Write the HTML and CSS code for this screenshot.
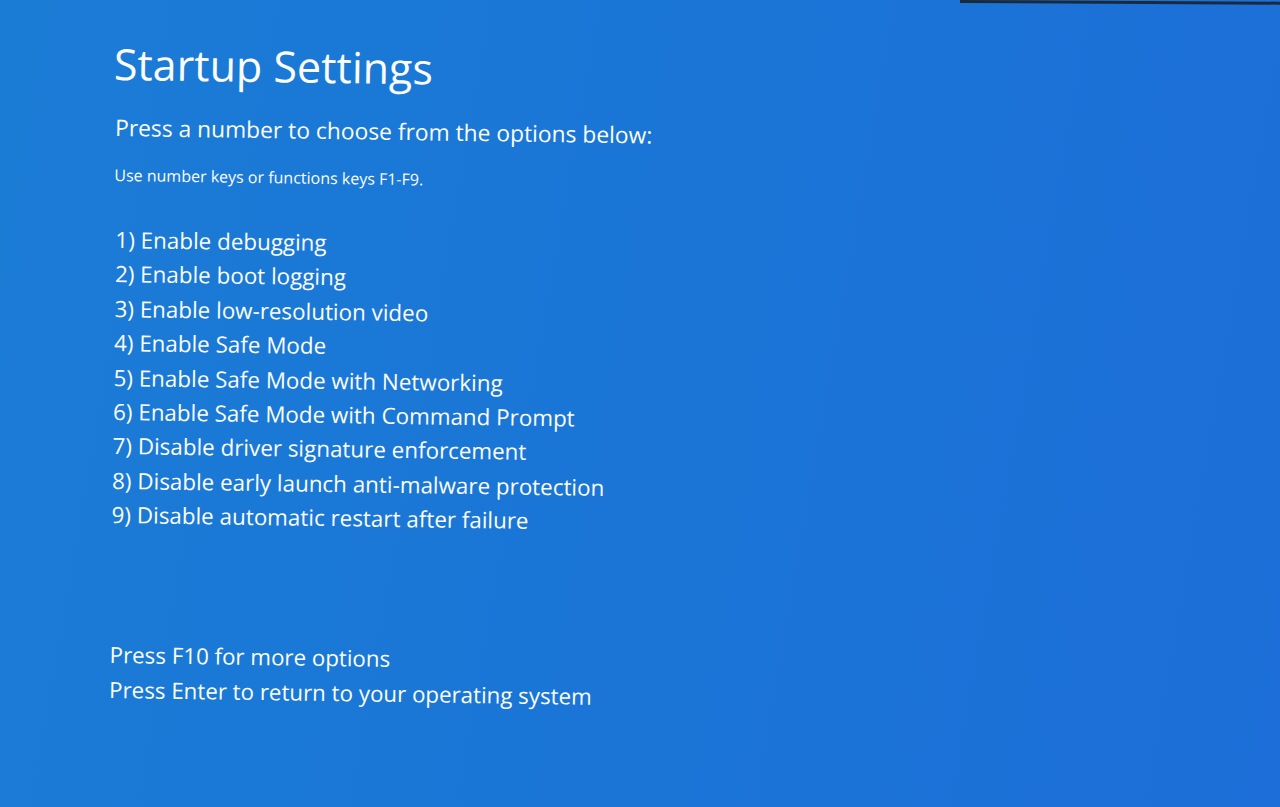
FILE: index.html
```html
<!DOCTYPE html>
<html lang="en">
<head>
<meta charset="utf-8">
<title>Startup Settings</title>
<link rel="stylesheet" href="styles.css">
</head>
<body>
<div class="bezel"></div>
<main class="screen">
  <h1 class="title">Startup Settings</h1>
  <p class="lead">Press a number to choose from the options below:</p>
  <p class="hint">Use number keys or functions keys F1-F9.</p>
  <ol class="options">
    <li>1) Enable debugging</li>
    <li>2) Enable boot logging</li>
    <li>3) Enable low-resolution video</li>
    <li>4) Enable Safe Mode</li>
    <li>5) Enable Safe Mode with Networking</li>
    <li>6) Enable Safe Mode with Command Prompt</li>
    <li>7) Disable driver signature enforcement</li>
    <li>8) Disable early launch anti-malware protection</li>
    <li>9) Disable automatic restart after failure</li>
  </ol>
  <div class="footer">
    <p>Press F10 for more options</p>
    <p>Press Enter to return to your operating system</p>
  </div>
</main>
</body>
</html>
```

FILE: styles.css
```css
html, body {
  margin: 0;
  padding: 0;
  width: 1280px;
  height: 807px;
  overflow: hidden;
}
body {
  position: relative;
  background: linear-gradient(100deg, #1b7cd6 0%, #1a76d6 45%, #1d6ed8 100%);
  color: #fbfdff;
  font-family: "Open Sans", "Noto Sans", sans-serif;
}
.bezel {
  position: absolute;
  top: 0;
  left: 960px;
  right: 0;
  height: 3px;
  background: #1a2a3a;
  transform: rotate(0.3deg);
  transform-origin: left top;
}
.screen {
  padding: 34px 0 0 114px;
  transform: rotate(0.8deg);
  transform-origin: 114px 60px;
}
.title {
  margin: 0;
  font-size: 43px;
  font-weight: 400;
  line-height: 60px;
  letter-spacing: 0;
}
.lead {
  margin: 19px 0 0 2px;
  font-size: 22.8px;
  line-height: 30px;
}
.hint {
  margin: 22px 0 0 2px;
  font-size: 16px;
  line-height: 20px;
}
.options {
  list-style: none;
  margin: 38px 0 0 0;
  padding: 0 0 0 4px;
  font-size: 22.4px;
  line-height: 34.4px;
}
.footer {
  margin-top: 104px;
  padding-left: 4px;
  font-size: 22.3px;
  line-height: 35px;
}
.footer p {
  margin: 0;
}
```
